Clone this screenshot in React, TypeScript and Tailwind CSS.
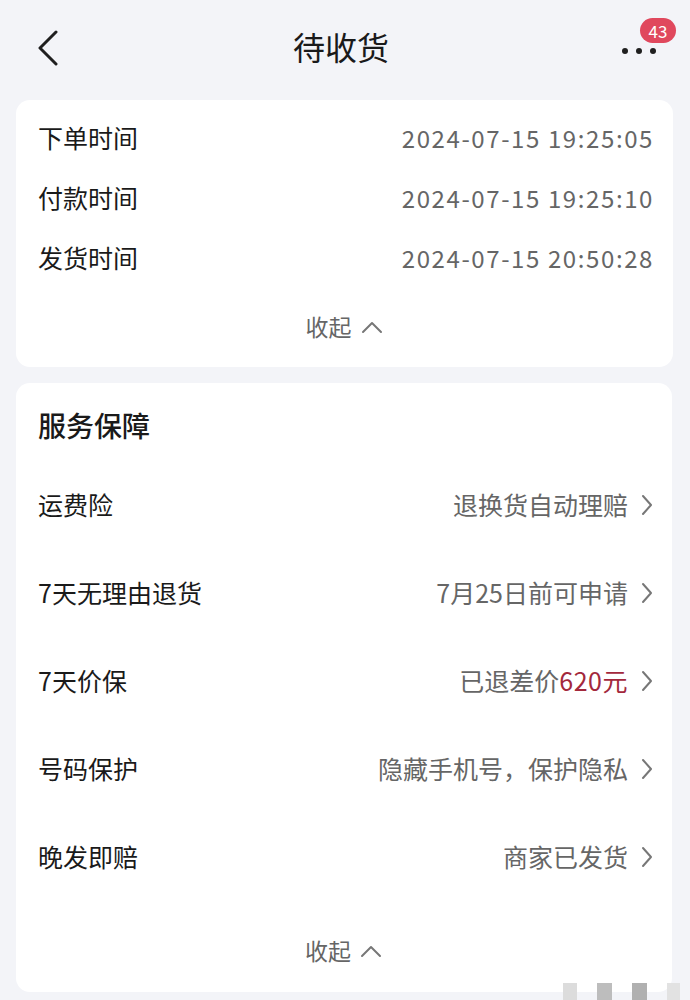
import React from 'react';

const font = { fontFamily: '"Noto Sans CJK SC", "Noto Sans", sans-serif' };

const times = [
  { label: '下单时间', value: '2024-07-15 19:25:05' },
  { label: '付款时间', value: '2024-07-15 19:25:10' },
  { label: '发货时间', value: '2024-07-15 20:50:28' },
];

const services: { label: string; value: React.ReactNode }[] = [
  { label: '运费险', value: '退换货自动理赔' },
  { label: '7天无理由退货', value: '7月25日前可申请' },
  {
    label: '7天价保',
    value: (
      <>
        已退差价<span className="text-[#a3283c] tracking-[0.5px]">620元</span>
      </>
    ),
  },
  { label: '号码保护', value: '隐藏手机号，保护隐私' },
  { label: '晚发即赔', value: '商家已发货' },
];

const Chevron = () => (
  <svg width="14" height="24" viewBox="0 0 14 24" fill="none" className="ml-[12px]">
    <path d="M3 3l8 9-8 9" stroke="#777" strokeWidth="2" strokeLinecap="round" strokeLinejoin="round" />
  </svg>
);

const Collapse = () => (
  <div className="flex items-center justify-center text-[23px] text-[#666]">
    <span>收起</span>
    <svg width="24" height="16" viewBox="0 0 24 16" fill="none" className="ml-[8px]">
      <path d="M3 13l9-9 9 9" stroke="#777" strokeWidth="2" strokeLinecap="round" strokeLinejoin="round" />
    </svg>
  </div>
);

export default function App() {
  return (
    <div className="relative w-[690px] h-[1000px] overflow-hidden bg-[#f3f4f8]" style={font}>
      {/* Header */}
      <div className="relative flex items-center justify-between h-[100px] px-[36px] pb-[4px]">
        <svg width="24" height="36" viewBox="0 0 24 36" fill="none">
          <path d="M20 2L4 18l16 16" stroke="#1f1f1f" strokeWidth="3" strokeLinecap="round" strokeLinejoin="round" />
        </svg>
        <h1 className="text-[32px] font-normal text-[#1a1a1a] pb-[4px]">待收货</h1>
        <div className="relative flex items-center gap-[8px] mr-[-2px] mt-[6px]">
          <span className="w-[6px] h-[6px] rounded-full bg-[#1f1f1f]" />
          <span className="w-[6px] h-[6px] rounded-full bg-[#1f1f1f]" />
          <span className="w-[6px] h-[6px] rounded-full bg-[#1f1f1f]" />
          <span className="absolute -top-[30px] -right-[20px] h-[25px] min-w-[36px] px-[6px] rounded-full bg-[#e0485d] text-white text-[17px] leading-[25px] text-center">
            43
          </span>
        </div>
      </div>

      {/* Time card */}
      <div className="mx-[16px] w-[657px] rounded-[14px] bg-white pt-[8px]">
        {times.map((t) => (
          <div key={t.label} className="flex items-center justify-between h-[60px] px-[22px]">
            <span className="text-[25px] text-[#1a1a1a]">{t.label}</span>
            <span className="text-[24px] text-[#666] tracking-[1.6px] mr-[-3px]">{t.value}</span>
          </div>
        ))}
        <div className="h-[79px] flex items-center justify-center pb-[2px]">
          <Collapse />
        </div>
      </div>

      {/* Service card */}
      <div className="mt-[16px] mx-[16px] w-[656px] rounded-[14px] bg-white pt-[22px]">
        <div className="h-[40px] flex items-center px-[22px]">
          <span className="text-[28px] font-medium text-[#1a1a1a]">服务保障</span>
        </div>
        <div className="mt-[16px]">
          {services.map((s) => (
            <div key={s.label} className="flex items-center justify-between h-[88px] px-[22px]">
              <span className="text-[25px] text-[#1a1a1a]">{s.label}</span>
              <div className="flex items-center text-[25px] text-[#666] mr-[-4px]">
                <span>{s.value}</span>
                <Chevron />
              </div>
            </div>
          ))}
        </div>
        <div className="h-[91px] flex items-center justify-center pt-[8px]">
          <Collapse />
        </div>
      </div>

      {/* bottom-right watermark blocks */}
      <div className="absolute bottom-0 right-[10px] flex gap-[20px]">
        <span className="w-[14px] h-[17px] bg-[#dcdcdc]" />
        <span className="w-[15px] h-[17px] bg-[#bdbdbd]" />
        <span className="w-[15px] h-[17px] bg-[#b0b0b0]" />
        <span className="w-[13px] h-[17px] bg-[#e2e2e2]" />
      </div>
    </div>
  );
}
